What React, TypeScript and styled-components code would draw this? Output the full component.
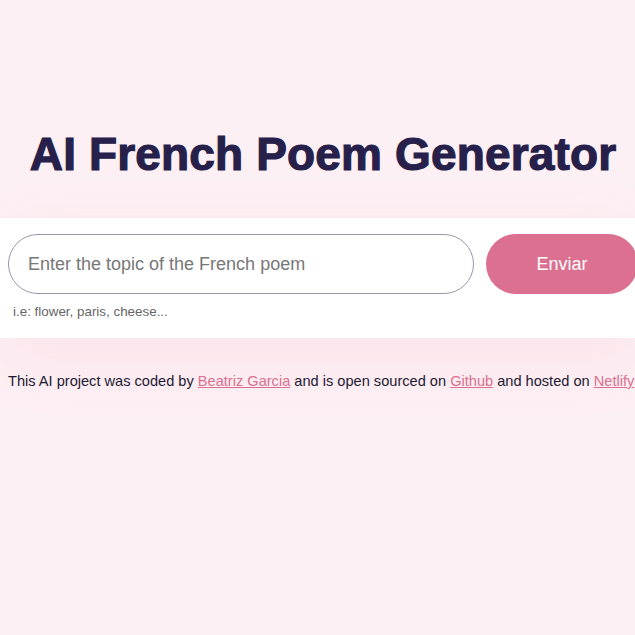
import React from "react";
import styled, { createGlobalStyle } from "styled-components";

const Global = createGlobalStyle`
  html, body { margin: 0; padding: 0; overflow-x: hidden; }
  body {
    background: #fdf0f4;
    font-family: "Liberation Sans", Arial, sans-serif;
    min-height: 635px;
  }
`;

const Page = styled.div`
  width: 646px;
  padding-top: 124px;
`;

const Header = styled.header`
  padding: 0 8px;
`;

const Title = styled.h1`
  margin: 0;
  text-align: center;
  font-size: 46px;
  line-height: 60px;
  font-weight: 700;
  color: #26204a;
  -webkit-text-stroke: 1.2px #26204a;
  letter-spacing: 0.15px;
`;

const FormBox = styled.section`
  margin-top: 34px;
  background: #ffffff;
  padding: 16px 8px 0;
  height: 120px;
  box-sizing: border-box;
  box-shadow: 0 20px 70px rgba(219, 112, 144, 0.09);
`;

const Row = styled.form`
  display: flex;
  gap: 12px;
`;

const Input = styled.input`
  width: 466px;
  height: 60px;
  box-sizing: border-box;
  border: 1px solid #9b97a8;
  border-radius: 30px;
  padding: 0 19px;
  font-family: "Liberation Sans", Arial, sans-serif;
  font-size: 18px;
  color: #333;
  background: #fff;
  outline: none;
  &::placeholder { color: #777; }
`;

const Button = styled.button`
  width: 152px;
  height: 60px;
  border: none;
  border-radius: 30px;
  background: #db7090;
  color: #fff;
  font-family: "Liberation Sans", Arial, sans-serif;
  font-size: 18px;
`;

const Hint = styled.div`
  margin: 10px 0 0 5px;
  font-size: 13.4px;
  color: #666;
`;

const Footer = styled.footer`
  padding: 0 8px;
  margin-top: 35px;
  font-size: 14.6px;
  color: #1c1a33;
  white-space: nowrap;
`;

const Link = styled.a`
  color: #db7090;
  text-decoration: underline;
`;

export default function App() {
  return (
    <>
      <Global />
      <Page>
        <Header>
          <Title>AI French Poem Generator</Title>
        </Header>
        <FormBox>
          <Row onSubmit={(e) => e.preventDefault()}>
            <Input placeholder="Enter the topic of the French poem" />
            <Button type="submit">Enviar</Button>
          </Row>
          <Hint>i.e: flower, paris, cheese...</Hint>
        </FormBox>
        <Footer>
          This AI project was coded by <Link href="#">Beatriz Garcia</Link> and is open sourced on{" "}
          <Link href="#">Github</Link> and hosted on <Link href="#">Netlify</Link>
        </Footer>
      </Page>
    </>
  );
}
